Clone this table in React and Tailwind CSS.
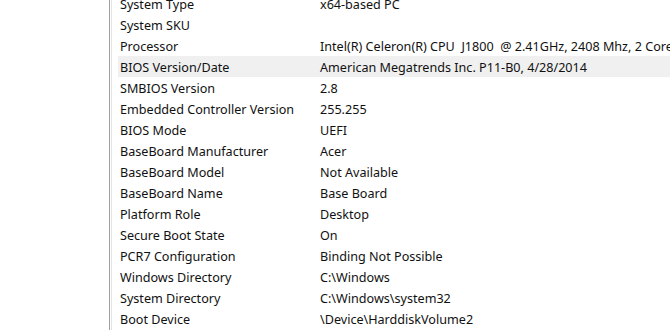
const rows = [
  ["System Type", "x64-based PC"],
  ["System SKU", ""],
  ["Processor", "Intel(R) Celeron(R) CPU  J1800  @ 2.41GHz, 2408 Mhz, 2 Core(s), 2 Logical Processor(s)"],
  ["BIOS Version/Date", "American Megatrends Inc. P11-B0, 4/28/2014"],
  ["SMBIOS Version", "2.8"],
  ["Embedded Controller Version", "255.255"],
  ["BIOS Mode", "UEFI"],
  ["BaseBoard Manufacturer", "Acer"],
  ["BaseBoard Model", "Not Available"],
  ["BaseBoard Name", "Base Board"],
  ["Platform Role", "Desktop"],
  ["Secure Boot State", "On"],
  ["PCR7 Configuration", "Binding Not Possible"],
  ["Windows Directory", "C:\\Windows"],
  ["System Directory", "C:\\Windows\\system32"],
  ["Boot Device", "\\Device\\HarddiskVolume2"],
];

export default function App() {
  const selected = 3;

  return (
    <div className="w-[670px] h-[330px] overflow-hidden bg-white flex font-['Noto_Sans',sans-serif] text-[12.6px] text-[#111]">
      <div className="w-[109px] shrink-0 bg-white" />
      <div className="w-[1px] shrink-0 bg-[#a0a0a0]" />
      <div className="w-[1px] shrink-0 bg-white" />
      <div className="w-[1px] shrink-0 bg-[#e3e3e3]" />
      <div className="flex-1 min-w-0 pl-[6px]">
        <div className="-mt-[7px]">
          {rows.map(([item, value], i) => (
            <div
              key={item}
              className={`flex h-[21px] items-center whitespace-pre pt-[4px] ${i === selected ? "bg-[#f0f0f0]" : ""}`}
            >
              <span className="w-[202px] shrink-0 pl-[2px]">{item}</span>
              <span>{value}</span>
            </div>
          ))}
        </div>
      </div>
    </div>
  );
}
